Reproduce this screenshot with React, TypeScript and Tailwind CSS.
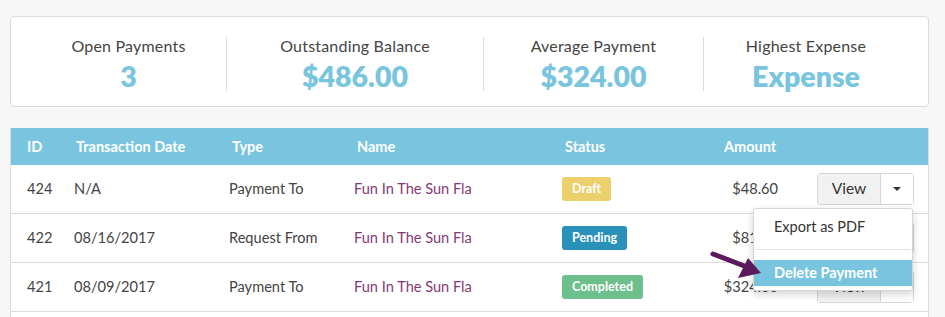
import React from "react";

interface Stat {
  label: string;
  value: string;
}

interface Row {
  id: string;
  date: string;
  type: string;
  name: string;
  status: "Draft" | "Pending" | "Completed";
  amount: string;
}

const stats: Stat[] = [
  { label: "Open Payments", value: "3" },
  { label: "Outstanding Balance", value: "$486.00" },
  { label: "Average Payment", value: "$324.00" },
  { label: "Highest Expense", value: "Expense" },
];

const rows: Row[] = [
  { id: "424", date: "N/A", type: "Payment To", name: "Fun In The Sun Fla", status: "Draft", amount: "$48.60" },
  { id: "422", date: "08/16/2017", type: "Request From", name: "Fun In The Sun Fla", status: "Pending", amount: "$81.00" },
  { id: "421", date: "08/09/2017", type: "Payment To", name: "Fun In The Sun Fla", status: "Completed", amount: "$324.00" },
];

const badgeColor: Record<Row["status"], string> = {
  Draft: "bg-[#ebd06c]",
  Pending: "bg-[#2a91b9]",
  Completed: "bg-[#6dbf8b]",
};

const cols = "grid grid-cols-[47px_155px_125px_208px_135px_113px_1fr] items-center";

const App: React.FC = () => {
  return (
    <div
      className="relative min-h-[317px] w-full bg-[#f7f7f7] pt-4 pl-[10px] pr-4"
      style={{ fontFamily: "Lato, 'Open Sans', sans-serif" }}
    >
      {/* summary card */}
      <div className="h-[91px] rounded border border-[#dcdcdc] bg-white px-5 py-5">
        <div className="grid h-full grid-cols-[195px_257px_220px_1fr]">
          {stats.map((s, i) => (
            <div
              key={s.label}
              className={`flex flex-col items-center justify-center ${
                i > 0 ? "border-l border-[#dedede]" : ""
              }`}
            >
              <p className="text-[16px] leading-[18px] tracking-[0.2px] text-[#444]">{s.label}</p>
              <p className="mt-[6px] text-[28.5px] font-extrabold leading-[30px] text-[#79c5de]">
                {s.value}
              </p>
            </div>
          ))}
        </div>
      </div>

      {/* table */}
      <div className="mt-[21px] border-l border-r border-[#dcdcdc] bg-white">
        <div className={`${cols} h-[37px] bg-[#79c5df] text-[14.5px] font-bold text-white`}>
          <div className="pl-4">ID</div>
          <div className="pl-[18px]">Transaction Date</div>
          <div className="pl-[19px]">Type</div>
          <div className="pl-[19px]">Name</div>
          <div className="pl-[19px]">Status</div>
          <div className="pl-[43px]">Amount</div>
          <div />
        </div>
        {rows.map((r) => (
          <div
            key={r.id}
            className={`${cols} h-[49px] border-b border-[#dcdcdc] text-[14.6px] text-[#444]`}
          >
            <div className="pl-4">{r.id}</div>
            <div className="pl-4">{r.date}</div>
            <div className="pl-4">{r.type}</div>
            <div className="pl-4 text-[#833a77]">{r.name}</div>
            <div className="pl-4">
              <span
                className={`inline-block rounded-[3px] px-[10px] py-[4px] text-[12.5px] font-bold leading-4 text-white ${badgeColor[r.status]}`}
              >
                {r.status}
              </span>
            </div>
            <div className="pr-4 text-right">{r.amount}</div>
            <div className="pl-[23px]">
              <div className="flex h-[32px] w-[97px] rounded-[3px] border border-[#d6d6d6] text-[15.5px] text-[#333]">
                <span className="flex w-[63px] items-center justify-center border-r border-[#d6d6d6] bg-[#f1f1f1]">
                  View
                </span>
                <span className="flex flex-1 items-center justify-center bg-white">
                  <span className="h-0 w-0 border-x-[4px] border-t-[4px] border-x-transparent border-t-[#333]" />
                </span>
              </div>
            </div>
          </div>
        ))}
        <div className="h-[10px]" />
      </div>

      {/* dropdown menu */}
      <div className="absolute left-[753px] top-[208px] w-[160px] rounded-[3px] border border-[#d6d6d6] bg-white pt-[8px] pb-[4px] shadow-[0_3px_8px_rgba(0,0,0,0.18)]">
        <div className="px-5 text-[14.5px] leading-[20px] text-[#333]">Export as PDF</div>
        <div className="mx-[1px] mt-[12px] mb-[10px] border-t border-[#e2e2e2]" />
        <div className="bg-[#79c5df] px-5 py-[3px] text-[14.5px] font-bold leading-[20px] text-white">
          Delete Payment
        </div>
      </div>

      {/* annotation arrow */}
      <svg className="absolute left-[705px] top-[246px]" width="60" height="40" viewBox="0 0 60 40">
        <line x1="8" y1="8" x2="42" y2="21" stroke="#5b1a5e" strokeWidth="5" strokeLinecap="round" />
        <polygon points="56,27 33,32 43,12" fill="#5b1a5e" />
      </svg>
    </div>
  );
};

export default App;
